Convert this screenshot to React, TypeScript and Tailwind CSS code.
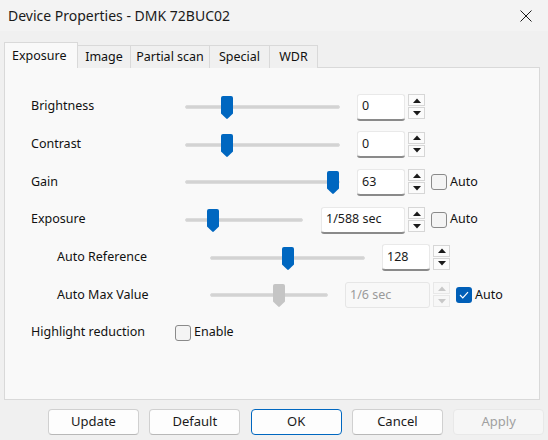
import React from "react";

const FONT = "font-['Noto_Sans',sans-serif]";

function Thumb({ x, disabled }: { x: number; disabled?: boolean }) {
  return (
    <svg
      className="absolute top-[2px]"
      style={{ left: x - 6 }}
      width={12}
      height={23}
      viewBox="0 0 12 23"
    >
      <path
        d="M0 2 Q0 0 2 0 H10 Q12 0 12 2 V17.5 L6.8 22.6 Q6 23.2 5.2 22.6 L0 17.5 Z"
        fill={disabled ? "#c5c5c5" : "#0067c0"}
      />
    </svg>
  );
}

function Slider({ width, thumb, disabled }: { width: number; thumb: number; disabled?: boolean }) {
  return (
    <div className="relative h-[25px] shrink-0" style={{ width }}>
      <div className="absolute left-0 right-0 top-[11px] h-[4px] rounded-full bg-[#d3d3d3] border border-[#dcdcdc]" />
      <Thumb x={thumb} disabled={disabled} />
    </div>
  );
}

function Spin({ disabled }: { disabled?: boolean }) {
  const c = disabled ? "#c8c8c8" : "#1a1a1a";
  const box = disabled
    ? "border-[#e8e8e8] bg-[#f7f7f7]"
    : "border-[#d6d6d6] bg-[#fbfbfb]";
  return (
    <div className="flex h-[25px] w-[17px] shrink-0 flex-col justify-center gap-[1px]">
      <div className={`flex h-[12px] items-center justify-center border ${box}`}>
        <svg width="8" height="5" viewBox="0 0 8 5">
          <path d="M0 5 L4 0.5 L8 5 Z" fill={c} />
        </svg>
      </div>
      <div className={`flex h-[12px] items-center justify-center border ${box}`}>
        <svg width="8" height="5" viewBox="0 0 8 5">
          <path d="M0 0 L4 4.5 L8 0 Z" fill={c} />
        </svg>
      </div>
    </div>
  );
}

function TextBox({ value, width, disabled }: { value: string; width: number; disabled?: boolean }) {
  return (
    <div
      className={
        disabled
          ? "flex h-[26px] shrink-0 items-center rounded-[3px] border border-[#e6e6e6] bg-[#f8f8f8] pl-[4px] text-[#9a9a9a]"
          : "flex h-[26px] shrink-0 items-center rounded-[3px] border border-[#e9e9e9] border-b-[#8a8a8a] bg-white pl-[4px] text-[#1a1a1a] shadow-[0_1px_0_#8a8a8a]"
      }
      style={{ width }}
    >
      {value}
    </div>
  );
}

function Check({ checked }: { checked?: boolean }) {
  if (checked)
    return (
      <div className="flex h-[16px] w-[16px] shrink-0 items-center justify-center rounded-[3px] bg-[#005fb8]">
        <svg width="10" height="8" viewBox="0 0 10 8">
          <path d="M1 4 L3.8 6.8 L9 1.2" stroke="white" strokeWidth="1.2" fill="none" />
        </svg>
      </div>
    );
  return <div className="h-[16px] w-[16px] shrink-0 rounded-[3px] border border-[#8a8a8a] bg-[#f4f4f4]" />;
}

function Row({
  label,
  indent,
  labelW,
  sliderW,
  thumb,
  gap1,
  value,
  boxW,
  auto,
  autoChecked,
  disabled,
}: {
  label: string;
  indent: number;
  labelW: number;
  sliderW: number;
  thumb: number;
  gap1: number;
  value: string;
  boxW: number;
  auto?: boolean;
  autoChecked?: boolean;
  disabled?: boolean;
}) {
  return (
    <div className="flex h-[25px] items-center" style={{ paddingLeft: indent }}>
      <div className="shrink-0 text-[#111]" style={{ width: labelW }}>
        {label}
      </div>
      <Slider width={sliderW} thumb={thumb} disabled={disabled} />
      <div className="shrink-0" style={{ width: gap1 }} />
      <TextBox value={value} width={boxW} disabled={disabled} />
      <div className="w-[3px] shrink-0" />
      <Spin disabled={disabled} />
      {auto && (
        <div className="ml-[6px] flex items-center gap-[3px]">
          <Check checked={autoChecked} />
          <span className="text-[#111]">Auto</span>
        </div>
      )}
    </div>
  );
}

function Btn({ label, kind }: { label: string; kind?: "ok" | "disabled" }) {
  const cls =
    kind === "ok"
      ? "border-[#0067c0] text-[#1a1a1a] bg-[#fdfdfd]"
      : kind === "disabled"
      ? "border-[#e8e8e8] text-[#a0a0a0] bg-[#f6f6f6]"
      : "border-[#d0d0d0] border-b-[#b8b8b8] text-[#1a1a1a] bg-[#fdfdfd]";
  return (
    <div className={`flex h-[26px] w-[91px] shrink-0 items-center justify-center rounded-[4px] border text-[13px] ${cls}`}>
      {label}
    </div>
  );
}

export default function App() {
  const tabs = [
    { t: "Image", w: 53 },
    { t: "Partial scan", w: 79 },
    { t: "Special", w: 60 },
    { t: "WDR", w: 48 },
  ];
  return (
    <div className={`h-[440px] w-[548px] overflow-hidden bg-[#f0f0f0] text-[12.5px] ${FONT}`}>
      {/* title bar */}
      <div className="flex h-[31px] items-center justify-between bg-[#f3f3f3] pl-[8px] pr-[16px]">
        <span className="text-[14px] text-[#1a1a1a]">Device Properties - DMK 72BUC02</span>
        <svg width="12" height="12" viewBox="0 0 12 12">
          <path d="M0.5 0.5 L11.5 11.5 M11.5 0.5 L0.5 11.5" stroke="#1a1a1a" strokeWidth="1" />
        </svg>
      </div>
      {/* tabs */}
      <div className="mt-[11px] flex h-[26px] items-end pl-[4px]">
        <div className="relative z-10 flex h-[26px] w-[74px] items-start border border-b-0 border-[#d9d9d9] bg-[#f9f9f9] pl-[7px] pt-[4px] text-[#111]">
          Exposure
        </div>
        {tabs.map((t) => (
          <div
            key={t.t}
            className="-ml-[1px] flex h-[23px] items-center justify-center border border-b-0 border-[#d9d9d9] bg-[#f0f0f0] text-[#111]"
            style={{ width: t.w + 1 }}
          >
            {t.t}
          </div>
        ))}
      </div>
      {/* panel */}
      <div className="-mt-[1px] ml-[4px] h-[333px] w-[536px] border border-[#d9d9d9] bg-[#f9f9f9] pt-[26px]">
        <div className="flex flex-col gap-[12.7px]">
          <Row label="Brightness" indent={26} labelW={154} sliderW={155} thumb={42} gap1={17} value="0" boxW={48} />
          <Row label="Contrast" indent={26} labelW={154} sliderW={155} thumb={42} gap1={17} value="0" boxW={48} />
          <Row label="Gain" indent={26} labelW={154} sliderW={155} thumb={148} gap1={17} value="63" boxW={48} auto />
          <Row label="Exposure" indent={26} labelW={154} sliderW={118} thumb={28} gap1={18} value="1/588 sec" boxW={84} auto />
          <Row label="Auto Reference" indent={52} labelW={153} sliderW={155} thumb={78} gap1={17} value="128" boxW={48} />
          <Row
            label="Auto Max Value"
            indent={52}
            labelW={153}
            sliderW={118}
            thumb={69}
            gap1={17}
            value="1/6 sec"
            boxW={85}
            auto
            autoChecked
            disabled
          />
          <div className="flex h-[25px] items-center pl-[26px]">
            <div className="w-[144px] shrink-0 text-[#111]">Highlight reduction</div>
            <div className="flex items-center gap-[3px]">
              <Check />
              <span className="text-[#111]">Enable</span>
            </div>
          </div>
        </div>
      </div>
      {/* buttons */}
      <div className="mt-[9px] flex gap-[10.3px] pl-[48px]">
        <Btn label="Update" />
        <Btn label="Default" />
        <Btn label="OK" kind="ok" />
        <Btn label="Cancel" />
        <Btn label="Apply" kind="disabled" />
      </div>
    </div>
  );
}
